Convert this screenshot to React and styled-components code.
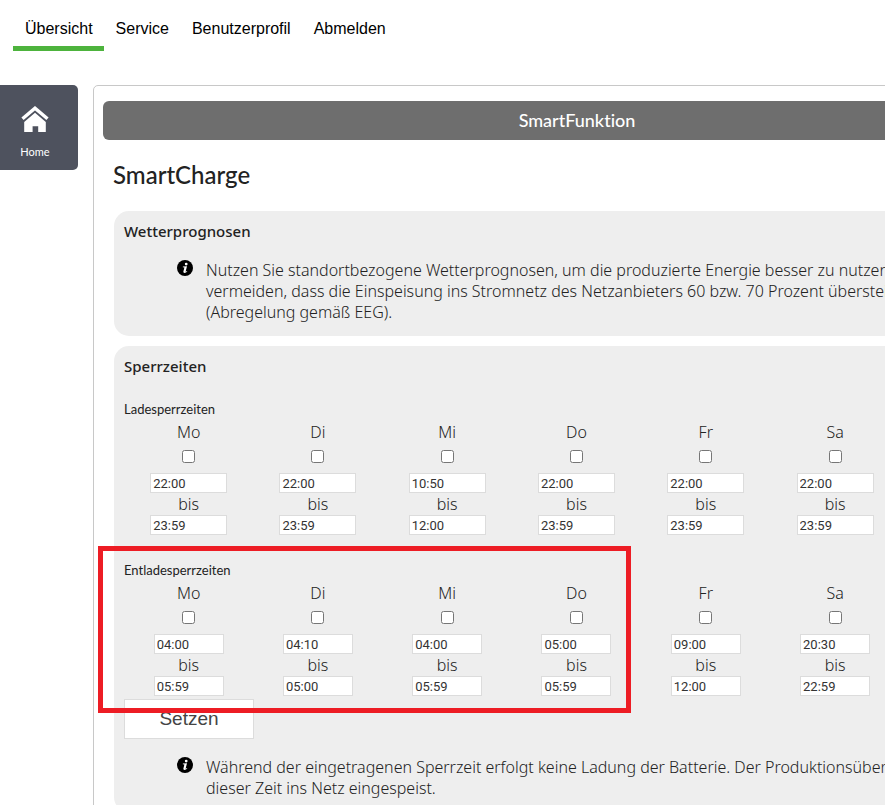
import React from 'react';
import styled, { createGlobalStyle } from 'styled-components';

const GlobalStyle = createGlobalStyle`
  * { box-sizing: border-box; }
  body {
    margin: 0;
    overflow-x: hidden;
    background: #fff;
    color: #222;
    font: 300 16px/21px "Noto Sans", "Open Sans", sans-serif;
  }
`;

const Nav = styled.nav`
  display: flex;
  padding-left: 13px;
  font: 16px/20px "Liberation Sans", Arial, sans-serif;
`;

const NavLink = styled.a`
  padding: 19px 11px 7px 12px;
  border-bottom: 5px solid ${(p) => (p.$active ? '#4db33d' : 'transparent')};
  color: #000;
  text-decoration: none;
`;

const Layout = styled.div`
  display: grid;
  grid-template-columns: 78px minmax(968px, 1fr);
  column-gap: 15px;
  align-items: start;
  margin-top: 34px;
`;

const HomeTile = styled.a`
  display: flex;
  flex-direction: column;
  align-items: center;
  gap: 11px;
  padding: 21px 8px 11px 0;
  border-radius: 0 5px 5px 0;
  background: #4e525e;
  color: #fff;
  font: 400 11px/15px Lato, sans-serif;
  text-decoration: none;
`;

const Content = styled.main`
  padding: 15px 9px;
  border: 1px solid #c8c8c8;
  border-radius: 5px;
`;

const Banner = styled.header`
  border-radius: 6px;
  background: #6e6e6e;
  color: #fff;
  font: 500 18px/39px Lato, sans-serif;
  font-variant-ligatures: none;
  text-align: center;
`;

const PageTitle = styled.h1`
  margin: 20px 10px 21px;
  font: 500 24px/30px Lato, sans-serif;
`;

const Panels = styled.div`
  display: grid;
  gap: 10px;
  margin: 0 12px 0 11px;
`;

const Panel = styled.section`
  padding: 10px 10px 13px;
  border-radius: 15px;
  background: #eee;
`;

const PanelTitle = styled.h2`
  margin: 0;
  font: 500 15px/20px "Noto Sans", sans-serif;
`;

const Hint = styled.div`
  display: flex;
  gap: 13px;
  margin-top: ${(p) => p.$top}px;
  padding-left: 53px;
`;

const HintText = styled.p`
  margin: 0;
  white-space: nowrap;
`;

const TimeGroup = styled.fieldset`
  position: relative;
  min-width: 0;
  margin: ${(p) => p.$top}px 0 0;
  padding: 0;
  border: 0;
`;

const GroupTitle = styled.legend`
  padding: 0 0 3px;
  font: 400 13px/20px Lato, sans-serif;
`;

const Week = styled.div`
  display: grid;
  grid-template-columns: repeat(7, 1fr);
`;

const Day = styled.div`
  display: flex;
  flex-direction: column;
  align-items: center;
`;

const DayLabel = styled.label`
  line-height: 20px;
`;

const Check = styled.input`
  width: 13px;
  height: 13px;
  margin: 8px 0 10px;
`;

const Until = styled.span`
  line-height: 22px;
`;

const TimeInput = styled.input`
  width: ${(p) => (p.$narrow ? 70 : 77)}px;
  height: 20px;
  padding: 0 2px;
  border: 1px solid #dcdcdc;
  background: #fff;
  color: #333;
  font: 400 13px/18px Roboto, sans-serif;
`;

const Highlight = styled.div`
  position: absolute;
  top: -37px;
  left: -26px;
  width: calc(100% * 4 / 7 + 16px);
  height: 167px;
  border: 5px solid #ed1c24;
  pointer-events: none;
  z-index: 1;
`;

const SetButton = styled.button`
  display: block;
  width: 130px;
  height: 40px;
  margin-top: 3px;
  padding: 0;
  border: 1px solid #dcdcdc;
  background: #fff;
  color: #444;
  font: 19px/38px "Liberation Sans", Arial, sans-serif;
`;

const InfoSvg = styled.svg`
  flex: none;
`;

function InfoIcon() {
  return (
    <InfoSvg width="16" height="16" viewBox="0 0 16 16" aria-hidden="true">
      <circle cx="8" cy="8" r="8" fill="#000" />
      <circle cx="9.2" cy="4.1" r="1.4" fill="#fff" />
      <path d="M5.9 6.6 10 6.2 8.7 11.3c-.1.5.2.6 1.2-.3l.4.5C8.6 13.4 6 13.4 6.4 11.5L7.4 7.4 5.8 7.2z" fill="#fff" />
    </InfoSvg>
  );
}

function HomeIcon() {
  return (
    <svg width="28" height="27" viewBox="0 0 28 27" aria-hidden="true">
      <path d="M1.5 12.8 14 2.2l12.5 10.6" fill="none" stroke="#fff" strokeWidth="3.4" />
      <path d="M14 6.7 24.8 16v10h-7.6v-5.8h-5.6V26H3.2V16z" fill="#fff" />
    </svg>
  );
}

const DAYS = ['Mo', 'Di', 'Mi', 'Do', 'Fr', 'Sa', 'So'];

const CHARGE = [
  ['22:00', '23:59'], ['22:00', '23:59'], ['10:50', '12:00'], ['22:00', '23:59'],
  ['22:00', '23:59'], ['22:00', '23:59'], ['22:00', '23:59'],
];

const DISCHARGE = [
  ['04:00', '05:59'], ['04:10', '05:00'], ['04:00', '05:59'], ['05:00', '05:59'],
  ['09:00', '12:00'], ['20:30', '22:59'], ['20:30', '22:59'],
];

function BlockTimes({ id, title, times, top, narrow, highlighted }) {
  return (
    <TimeGroup $top={top}>
      <GroupTitle>{title}</GroupTitle>
      <Week>
        {DAYS.map((day, i) => (
          <Day key={day}>
            <DayLabel htmlFor={`${id}-${day}`}>{day}</DayLabel>
            <Check type="checkbox" id={`${id}-${day}`} />
            <TimeInput $narrow={narrow} defaultValue={times[i][0]} aria-label={`${title} ${day} von`} />
            <Until>bis</Until>
            <TimeInput $narrow={narrow} defaultValue={times[i][1]} aria-label={`${title} ${day} bis`} />
          </Day>
        ))}
      </Week>
      {highlighted && <Highlight />}
    </TimeGroup>
  );
}

export default function App() {
  return (
    <>
      <GlobalStyle />
      <Nav>
        <NavLink href="#uebersicht" $active>Übersicht</NavLink>
        <NavLink href="#service">Service</NavLink>
        <NavLink href="#profil">Benutzerprofil</NavLink>
        <NavLink href="#abmelden">Abmelden</NavLink>
      </Nav>
      <Layout>
        <HomeTile href="#home">
          <HomeIcon />
          Home
        </HomeTile>
        <Content>
          <Banner>SmartFunktion</Banner>
          <PageTitle>SmartCharge</PageTitle>
          <Panels>
            <Panel>
              <PanelTitle>Wetterprognosen</PanelTitle>
              <Hint $top={19}>
                <InfoIcon />
                <HintText>
                  Nutzen Sie standortbezogene Wetterprognosen, um die produzierte Energie besser zu nutzen und zu
                  <br />
                  vermeiden, dass die Einspeisung ins Stromnetz des Netzanbieters 60 bzw. 70 Prozent übersteigt
                  <br />
                  (Abregelung gemäß EEG).
                </HintText>
              </Hint>
            </Panel>
            <Panel>
              <PanelTitle>Sperrzeiten</PanelTitle>
              <BlockTimes id="laden" title="Ladesperrzeiten" times={CHARGE} top={23} />
              <BlockTimes id="entladen" title="Entladesperrzeiten" times={DISCHARGE} top={25} narrow highlighted />
              <SetButton type="button">Setzen</SetButton>
              <Hint $top={18}>
                <InfoIcon />
                <HintText>
                  Während der eingetragenen Sperrzeit erfolgt keine Ladung der Batterie. Der Produktionsüberschuss wird in
                  <br />
                  dieser Zeit ins Netz eingespeist.
                </HintText>
              </Hint>
            </Panel>
          </Panels>
        </Content>
      </Layout>
    </>
  );
}
